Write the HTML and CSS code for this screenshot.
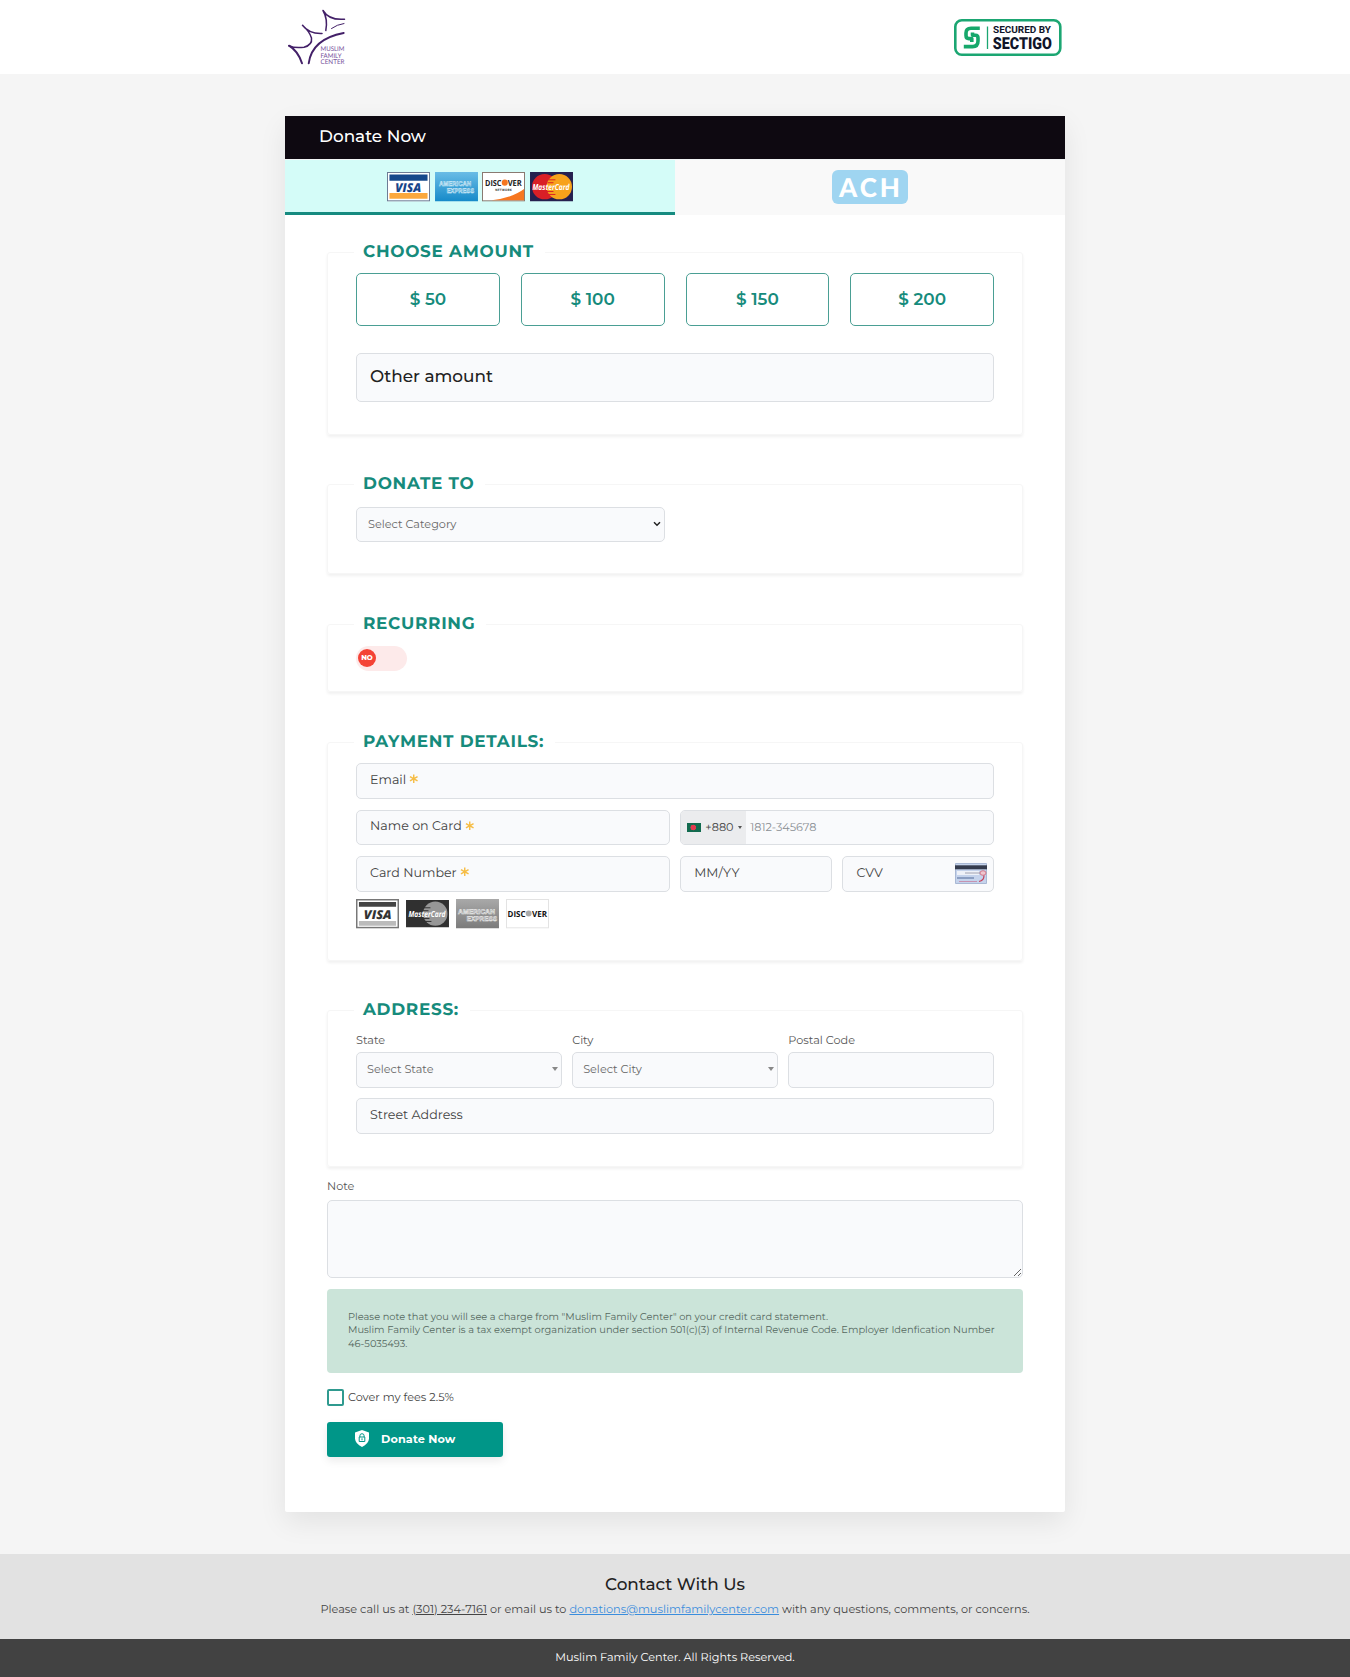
FILE: index.html
```html
<!DOCTYPE html>
<html lang="en">
<head>
<meta charset="utf-8">
<title>Donate Now</title>
<link rel="stylesheet" href="styles.css">
</head>
<body>
<header class="site-header">
  <div class="header-inner">
    <svg class="logo" viewBox="0 0 60 60" width="60" height="60">
      <g fill="none" stroke="#432068" stroke-width="1.500" stroke-linecap="round" stroke-linejoin="round">
        <path d="M4 37.700Q10 40.500 19 39.200Q27.500 37 26.500 30Q24.500 23.500 17.500 17.300Q24 26 37 25.500"/>
        <path d="M4 37.700Q13 43 17 55.300" stroke-width="2"/>
        <path d="M40.800 22.500Q43 11 38 2.500Q44 12.500 59.500 11.200"/>
        <path d="M46.500 20.500Q52 16.500 59 15.500" stroke-width="1"/>
        <path d="M23.700 55.300Q27 31 58.700 25" stroke-width="1.900"/>
      </g>
      <g fill="#75509a" font-family="Lato, sans-serif" font-size="6.500">
        <text x="35.500" y="43" textLength="24" lengthAdjust="spacingAndGlyphs">MUSLIM</text>
        <text x="35.500" y="49.500" textLength="21" lengthAdjust="spacingAndGlyphs">FAMILY</text>
        <text x="35.500" y="55.700" textLength="24" lengthAdjust="spacingAndGlyphs">CENTER</text>
      </g>
    </svg>
    <svg class="secured" viewBox="0 0 108 38" width="108" height="38">
      <rect x="1.300" y="1.300" width="105" height="34.400" rx="6.500" fill="#fff" stroke="#1ba672" stroke-width="2.600"/>
      <g fill="none" stroke="#16a86b" stroke-width="3.600" stroke-linejoin="round">
        <path d="M25.800 9.200H17Q12 9.200 12 14V16.500Q12 19.600 15 19.600H17.800V23"/>
        <path d="M18.500 13.500V16.300H21.500Q24 16.300 24 19V22Q24 27.600 18.500 27.600H9.800"/>
      </g>
      <path d="M33.500 7.500V30" stroke="#1ba672" stroke-width="1.300"/>
      <g fill="#10152a" font-family="Roboto, sans-serif" font-weight="700">
        <text x="39" y="14.300" font-size="9.800" textLength="58" lengthAdjust="spacingAndGlyphs">SECURED BY</text>
        <text x="38.800" y="29.700" font-size="16.500" font-weight="900" textLength="59" lengthAdjust="spacingAndGlyphs">SECTIGO</text>
      </g>
    </svg>
  </div>
</header>

<main class="card">
  <h1 class="card-title">Donate Now</h1>
  <div class="tabs">
    <div class="tab tab-active">
      <svg class="pay" viewBox="0 0 44 30"><rect width="44" height="30" fill="#fff"/><rect x=".5" y=".5" width="43" height="29" fill="#fff" stroke="#6b7a94"/><path d="M2.500 2.500h39v6.500h-39z" fill="#15488b"/><path d="M2.500 21.500h39v6h-39z" fill="#fba83c"/><text x="8.500" y="20.400" class="visa" fill="#17458a" textLength="26.500" lengthAdjust="spacingAndGlyphs">VISA</text></svg>
      <svg class="pay" viewBox="0 0 44 30"><defs><linearGradient id="amex" x2="0" y2="1"><stop stop-color="#69bce6"/><stop offset="1" stop-color="#168ac9"/></linearGradient></defs><path d="M0 0h44v30H0z" fill="url(#amex)"/><g class="amex" stroke="#d9f1fc" fill="#2f8cc4"><text x="4" y="14.500" textLength="33" lengthAdjust="spacingAndGlyphs">AMERICAN</text><text x="12" y="22" textLength="28" lengthAdjust="spacingAndGlyphs">EXPRESS</text></g></svg>
      <svg class="pay" viewBox="0 0 44 30"><rect x=".5" y=".5" width="43" height="29" fill="#fff" stroke="#88786f"/><path d="M43 17.500V29H10Q32 26 43 17.500" fill="#f67620"/><circle cx="23.300" cy="10.900" r="3.100" fill="#f67620"/><g class="disc" fill="#222"><text x="3" y="14" textLength="17" lengthAdjust="spacingAndGlyphs">DISC</text><text x="26.300" y="14" textLength="14.500" lengthAdjust="spacingAndGlyphs">VER</text></g><text x="13.500" y="19" font-family="Roboto, sans-serif" font-size="3.200" font-weight="700" fill="#333" textLength="17">NETWORK</text></svg>
      <svg class="pay" viewBox="0 0 44 30"><path d="M0 0h44v30H0z" fill="#25204f"/><circle cx="15" cy="15" r="13" fill="#d91f26"/><circle cx="30" cy="15" r="13" fill="#f7a21b"/><path d="M19 8h7M18 11h6M17 20h7M19 23h7" stroke="#d91f26"/><text x="2.500" y="18.300" class="master" fill="#fff" textLength="38" lengthAdjust="spacingAndGlyphs">MasterCard</text></svg>
    </div>
    <div class="tab"><span class="ach">ACH</span></div>
  </div>

  <form class="form">
    <section class="group group-amount">
      <h2 class="legend">CHOOSE AMOUNT</h2>
      <div class="amounts">
        <button type="button" class="amount">$ 50</button>
        <button type="button" class="amount">$ 100</button>
        <button type="button" class="amount">$ 150</button>
        <button type="button" class="amount">$ 200</button>
      </div>
      <div class="field field-other">Other amount</div>
    </section>

    <section class="group group-to">
      <h2 class="legend">DONATE TO</h2>
      <div class="field field-select field-category"><span>Select Category</span>
        <svg class="chevron" viewBox="0 0 8 6" width="8" height="6"><path d="M1 1.200l3 3 3-3" fill="none" stroke="#222" stroke-width="1.500"/></svg>
      </div>
    </section>

    <section class="group group-recurring">
      <h2 class="legend">RECURRING</h2>
      <div class="toggle"><span class="knob">NO</span></div>
    </section>

    <section class="group group-payment">
      <h2 class="legend">PAYMENT DETAILS:</h2>
      <div class="grid-pay">
        <div class="field span4">Email <svg class="star" viewBox="0 0 10 10"><path d="M5 .5v9M1 2.700l8 4.600M9 2.700L1 7.300"/></svg></div>
        <div class="field span2">Name on Card <svg class="star" viewBox="0 0 10 10"><path d="M5 .5v9M1 2.700l8 4.600M9 2.700L1 7.300"/></svg></div>
        <div class="field field-phone span2">
          <div class="dial"><span class="flag"></span><span>+880</span><i class="caret caret-small"></i></div>
          <span class="phone-hint">1812-345678</span>
        </div>
        <div class="field span2">Card Number <svg class="star" viewBox="0 0 10 10"><path d="M5 .5v9M1 2.700l8 4.600M9 2.700L1 7.300"/></svg></div>
        <div class="field">MM/YY</div>
        <div class="field field-cvv"><span>CVV</span>
          <svg class="cvv-card" viewBox="0 0 32 21" width="32" height="21"><path d="M.5.500h31v20H.5z" fill="#c5d3ec" stroke="#a9b8d4"/><path d="M0 2.300h32v4H0z" fill="#343b4d"/><path d="M2 8h22v4H2z" fill="#eef1f8"/><path d="M10 10h15" stroke="#8d8f9e" stroke-width=".8"/><path d="M2 15h17" stroke="#7187b1" stroke-width="1.400"/><path d="M4 18.500h18" stroke="#c693b1"/><ellipse cx="28" cy="10" rx="3" ry="2.300" fill="#eec6cf" stroke="#cf6478" stroke-width=".8"/><path d="M29 12.500q0 5-5 6" fill="none" stroke="#c7405a" stroke-width="1.200"/></svg>
        </div>
      </div>
      <div class="accepted">
        <svg class="pay" viewBox="0 0 44 30"><rect x=".75" y=".75" width="42.500" height="28.500" fill="#fff" stroke="#777" stroke-width="1.500"/><path d="M3 3h38v5H3z" fill="#444"/><path d="M3 22.500h38v5H3z" fill="#bbb"/><text x="8" y="20.500" class="visa" fill="#333" textLength="28.500" lengthAdjust="spacingAndGlyphs">VISA</text></svg>
        <svg class="pay" viewBox="0 0 44 30"><path d="M0 1h44v28H0z" fill="#303030"/><circle cx="30" cy="15" r="12.500" fill="#979797"/><path d="M18 9h7M17 12h6M17 20h7M19 23h7" stroke="#303030"/><text x="2.500" y="18.500" class="master" fill="#fff" textLength="38" lengthAdjust="spacingAndGlyphs">MasterCard</text></svg>
        <svg class="pay" viewBox="0 0 44 30"><defs><linearGradient id="grey" x2="0" y2="1"><stop stop-color="#a9a9a9"/><stop offset="1" stop-color="#7b7b7b"/></linearGradient></defs><path d="M0 0h44v30H0z" fill="url(#grey)"/><g class="amex" stroke="#f2f2f2" fill="#777"><text x="2" y="15" textLength="38" lengthAdjust="spacingAndGlyphs">AMERICAN</text><text x="11" y="23" textLength="31" lengthAdjust="spacingAndGlyphs">EXPRESS</text></g></svg>
        <svg class="pay" viewBox="0 0 44 30"><rect x=".5" y=".5" width="43" height="29" fill="#fff" stroke="#e3e3e3"/><circle cx="23.200" cy="14.900" r="3" fill="#aaa"/><g class="disc" fill="#111"><text x="1.500" y="18" textLength="18.500" lengthAdjust="spacingAndGlyphs">DISC</text><text x="26.500" y="18" textLength="15.500" lengthAdjust="spacingAndGlyphs">VER</text></g></svg>
      </div>
    </section>

    <section class="group group-address">
      <h2 class="legend">ADDRESS:</h2>
      <div class="grid-adr">
        <span class="label">State</span><span class="label">City</span><span class="label">Postal Code</span>
        <div class="field field-select"><span>Select State</span><i class="caret"></i></div>
        <div class="field field-select"><span>Select City</span><i class="caret"></i></div>
        <div class="field"></div>
        <div class="field street">Street Address</div>
      </div>
    </section>

    <label class="label label-note" for="note">Note</label>
    <textarea id="note" class="note"></textarea>
    <div class="notice">
      <p>Please note that you will see a charge from "Muslim Family Center" on your credit card statement.</p>
      <p>Muslim Family Center is a tax exempt organization under section 501(c)(3) of Internal Revenue Code. Employer Idenfication Number<br>46-5035493.</p>
    </div>
    <div class="fees"><span class="check"></span><span>Cover my fees 2.5%</span></div>
    <button type="button" class="submit">
      <svg viewBox="0 0 14 17" width="14" height="17"><path d="M7 0l7 2.600v6.200Q13.500 14 7 17 .5 14 0 8.800V2.600z" fill="#fff"/><path d="M4.900 7V5.800a2.100 2.100 0 0 1 4.200 0V7" fill="none" stroke="#009688"/><path d="M4.200 7h5.600v4.500H4.200z" fill="none" stroke="#009688"/><path d="M7 8.300v2" stroke="#009688"/></svg>
      <span>Donate Now</span>
    </button>
  </form>
</main>

<footer>
  <div class="contact">
    <h3 class="contact-title">Contact With Us</h3>
    <p class="contact-text">Please call us at <a class="tel">(301) 234-7161</a> or email us to <a class="mail">donations@muslimfamilycenter.com</a> with any questions, comments, or concerns.</p>
  </div>
  <div class="copyright">Muslim Family Center. All Rights Reserved.</div>
</footer>
</body>
</html>
```
FILE: styles.css
```css
* { box-sizing: border-box; }
body { margin: 0; background: #f5f5f5; color: #444; font-family: Montserrat, Inter, sans-serif; font-size: 11.250px; text-rendering: geometricPrecision; }
h1, h2, h3, p { margin: 0; }
button { font-family: inherit; }
svg { overflow: visible; }

.site-header { height: 74px; background: #fff; }
.header-inner { width: 780px; margin: 0 auto; display: flex; justify-content: space-between; padding: 8px 3px 0 0; }
.secured { margin-top: 11px; }

.card { width: 780px; height: 1396px; margin: 42px auto; background: #fff; border-radius: 2px; box-shadow: 0 10px 28px rgba(0, 0, 0, .08); }
.card-title { height: 43px; padding-left: 34px; background: #0e0911; color: #fff; font-size: 16.875px; font-weight: 500; line-height: 42px; }
.tabs { display: flex; height: 55.500px; border-top: 1px solid #f1f5f5; }
.tab { flex: 1; display: flex; justify-content: center; align-items: center; gap: 4.600px; background: #f9f9f9; }
.tab-active { background: #d4fcf8; border-bottom: 3px solid #168b80; padding-top: 2px; }
.pay { width: 43px; height: 29.300px; flex: none; }
.visa { font: italic 900 12.500px "Open Sans", sans-serif; }
.amex { font: 700 7px "Liberation Sans", sans-serif; stroke-width: .5px; }
.disc { font: 700 8.500px "Open Sans", sans-serif; }
.master { font: italic 700 8.500px "Open Sans", sans-serif; }
.ach { width: 76px; height: 34px; border-radius: 6px; background: #9fd5f1; color: #fff; font: 900 26px/34px Lato, sans-serif; letter-spacing: 3px; text-align: center; padding-left: 2px; }

.form { padding: 37.500px 42px 0; }
.group { border: 1px solid #f6f6f6; border-radius: 3px; padding: 0 28px; box-shadow: 0 2px 3px rgba(0, 0, 0, .06); margin-bottom: 50px; }
.group-amount { height: 183px; margin-bottom: 49px; }
.group-to { height: 90px; }
.group-recurring { height: 68px; }
.group-payment { height: 219px; margin-bottom: 49px; }
.group-address { height: 157px; margin-bottom: 9px; }
.legend { width: max-content; height: 24px; margin: -13px 0 9px -2px; padding: 0 11px 0 9px; background: #fff; color: #168b7c; font-size: 16.875px; line-height: 24px; font-weight: 700; letter-spacing: .703px; }

.field { height: 35.500px; display: flex; align-items: center; padding: 0 13px 1px; background: #f9fafc; border: 1px solid #dcdfe3; border-radius: 5px; font-size: 12.660px; }
.amounts { display: grid; grid-template-columns: repeat(4, 1fr); gap: 21px; }
.amount { height: 53px; border: 1px solid #4a9f94; border-radius: 5px; background: #fff; color: #168b7c; font-size: 16.875px; font-weight: 600; padding: 0 0 1px; }
.field-other { height: 49px; margin-top: 27px; font-size: 16.875px; font-weight: 500; color: #222; padding-bottom: 1px; }
.field-select { padding: 0 3px 1px 10px; justify-content: space-between; font-size: 11.250px; color: #666; }
.field-category { width: 309px; height: 35.500px; margin-top: 10.500px; padding: 0 3px 1px 11px; }
.toggle { width: 51px; height: 25px; margin: 10px 0 0; padding: 3px 2px; border-radius: 13px; background: #fdeaea; }
.knob { display: block; width: 18px; height: 18px; border-radius: 50%; background: #f44336; color: #fff; font-size: 7px; font-weight: 800; line-height: 18px; text-align: center; }
.grid-pay { display: grid; grid-template-columns: 1fr 1fr 1fr 1fr; gap: 11px 10.500px; grid-auto-rows: 35.500px; }
.span2 { grid-column: span 2; }
.span4 { grid-column: span 4; }
.star { width: 9.500px; height: 9.500px; margin: -3px 0 0 3px; fill: none; stroke: #f6bd45; stroke-width: 1.500; }
.field-phone { padding: 0; overflow: hidden; font-size: 11.250px; }
.dial { display: flex; align-items: center; height: 100%; width: 65px; padding-left: 6px; gap: 4px; background: #ebecee; }
.flag { width: 14px; height: 9px; background: radial-gradient(circle at 45% 50%, #e33b4f 2.600px, #126b4f 3.100px); }
.caret { border: 3px solid transparent; border-top: 4px solid #888; border-bottom: 0; }
.caret-small { border-width: 2px; border-top: 3px solid #555; }
.phone-hint { margin-left: 4px; color: #8a8f94; }
.field-cvv { justify-content: space-between; padding-right: 6px; }
.accepted { display: flex; gap: 7px; margin-top: 7px; }
.grid-adr { display: grid; grid-template-columns: 1fr 1fr 1fr; column-gap: 10.500px; grid-template-rows: 21px 35.500px 46px; }
.label { font-size: 11.250px; line-height: 18px; color: #555; }
.street { grid-column: span 3; margin-top: 10.500px; }
.label-note { display: block; height: 24px; line-height: 20px; }
.note { display: block; width: 100%; height: 78px; background: #f9fafc; border: 1px solid #dcdfe3; border-radius: 5px; resize: vertical; }
.notice { height: 84px; margin-top: 11px; padding: 21.500px 21px; border-radius: 4px; background: #cbe4d9; color: #55685f; font-size: 9.860px; line-height: 13.500px; white-space: nowrap; }
.fees { display: flex; height: 18px; margin-top: 16px; gap: 4px; line-height: 16px; }
.check { width: 17px; height: 17px; border: 2px solid #2f9a8f; border-radius: 2px; }
.submit { display: flex; align-items: center; width: 176px; height: 35px; margin-top: 15px; padding: 0 0 2px 28px; gap: 12px; border: 0; border-radius: 3px; background: #009688; color: #fff; font-size: 11.250px; font-weight: 700; letter-spacing: .13px; box-shadow: 0 4px 8px rgba(0, 0, 0, .08); }

.contact { height: 85px; padding-top: 20px; background: #e2e2e2; text-align: center; }
.contact-title { font-size: 16.875px; font-weight: 500; line-height: 22px; color: #222; }
.contact-text { font-size: 11.290px; line-height: 16px; margin-top: 5px; white-space: nowrap; }
.contact-text a { text-decoration: underline; }
.mail { color: #3a8ddd; }
.copyright { height: 38px; line-height: 36.500px; background: #424242; color: #fff; text-align: center; }
```
